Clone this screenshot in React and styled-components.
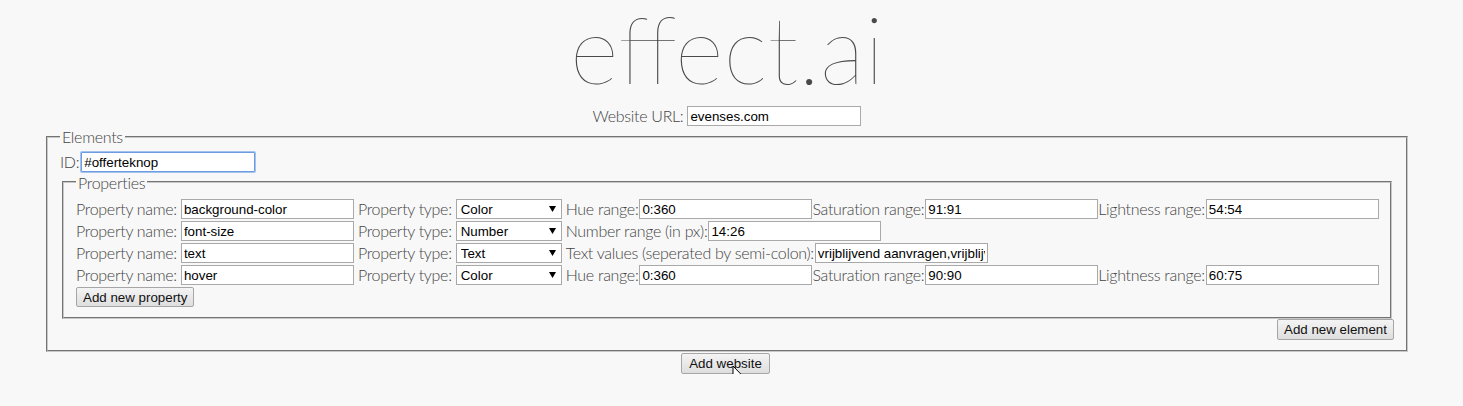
import React from "react";
import styled, { createGlobalStyle } from "styled-components";

const Global = createGlobalStyle`
  html, body { margin: 0; padding: 0; background: #f8f8f8; }
  body { font-family: Lato, "Open Sans", sans-serif; font-weight: 300; color: #3a3a3a; font-size: 16px; }
`;

const Page = styled.div`
  width: 1366px;
  margin-left: 44px;
  display: flex;
  flex-direction: column;
  align-items: center;
  position: relative;
`;

const Title = styled.h1`
  margin: 0;
  font-family: Lato, sans-serif;
  font-weight: 100;
  font-size: 94px;
  line-height: 96px;
  color: #4a4a4a;
  letter-spacing: 0;
`;

const UrlRow = styled.div`
  margin-top: 10px;
  height: 20px;
  display: flex;
  align-items: center;
`;

const Label = styled.span`
  font-family: Lato, sans-serif;
  font-weight: 300;
  font-size: 16px;
  line-height: 20px;
  letter-spacing: -0.3px;
  color: #444;
  white-space: nowrap;
  margin-right: ${p => p.$space || 0}px;
`;

const TextInput = styled.input`
  box-sizing: border-box;
  width: ${p => p.$w || 173}px;
  height: 20px;
  margin: 0 ${p => p.$after || 0}px 0 0;
  padding: 0 2px;
  border: 1px solid #a9a9a9;
  background: #fff;
  font-family: Arial, "Liberation Sans", sans-serif;
  font-size: 13.333px;
  color: #000;
  outline: none;
`;

const FocusInput = styled(TextInput)`
  border: 1px solid #6d9de0;
  box-shadow: 0 0 0 1px #a3c3ee;
  border-radius: 1px;
`;

const Fieldset = styled.fieldset`
  box-sizing: border-box;
  align-self: stretch;
  margin: ${p => p.$top || 0}px 2px 0;
  padding: ${p => p.$pt || 5.6}px 12px ${p => p.$pb || 10}px;
  border: 2px groove #c8c8c8;
  min-width: 0;
`;

const Legend = styled.legend`
  padding: 0 2px;
  font-family: Lato, sans-serif;
  font-weight: 300;
  font-size: 16px;
  line-height: 19px;
  letter-spacing: -0.3px;
  color: #444;
`;

const Row = styled.div`
  display: flex;
  align-items: center;
  height: ${p => p.$h || 22}px;
  justify-content: ${p => (p.$end ? "flex-end" : "flex-start")};
`;

const SelectWrap = styled.span`
  position: relative;
  display: inline-flex;
  margin-right: 4px;
`;

const Select = styled.select`
  appearance: none;
  -webkit-appearance: none;
  box-sizing: border-box;
  width: 106px;
  height: 20px;
  border: 1px solid #a9a9a9;
  border-radius: 0;
  background: #fff;
  padding: 0 0 0 4px;
  font-family: Arial, "Liberation Sans", sans-serif;
  font-size: 13.333px;
  color: #000;
  outline: none;
`;

const Arrow = styled.svg`
  position: absolute;
  right: 6px;
  top: 7px;
  pointer-events: none;
`;

const Button = styled.button`
  box-sizing: border-box;
  height: ${p => p.$h || 20}px;
  padding: 0 ${p => p.$px || 6}px;
  border: 1px solid #a6a6a6;
  border-radius: 2px;
  background: linear-gradient(#f4f4f4, #dedede);
  font-family: Arial, "Liberation Sans", sans-serif;
  font-size: 13.333px;
  color: #111;
  white-space: nowrap;
`;

const BottomWrap = styled.div`
  position: relative;
  display: flex;
  margin-top: 1px;
  margin-right: 3px;
`;

const Cursor = styled.svg`
  position: absolute;
  left: 51px;
  top: 12px;
`;

function TypeSelect({ value }) {
  return (
    <SelectWrap>
      <Select defaultValue={value}>
        <option>Color</option>
        <option>Number</option>
        <option>Text</option>
      </Select>
      <Arrow width="7" height="6" viewBox="0 0 7 6">
        <path d="M0 0 H7 L3.5 6 Z" fill="#000" />
      </Arrow>
    </SelectWrap>
  );
}

function PropRow({ name, type, children }) {
  return (
    <Row>
      <Label $space={4}>Property name:</Label>
      <TextInput defaultValue={name} $after={4} />
      <Label $space={4}>Property type:</Label>
      <TypeSelect value={type} />
      {children}
    </Row>
  );
}

function ColorRanges({ sat, light }) {
  return (
    <>
      <Label $space={1}>Hue range:</Label>
      <TextInput defaultValue="0:360" />
      <Label $space={1}>Saturation range:</Label>
      <TextInput defaultValue={sat} />
      <Label $space={1}>Lightness range:</Label>
      <TextInput defaultValue={light} />
    </>
  );
}

export default function App() {
  return (
    <>
      <Global />
      <Page>
        <Title>effect.ai</Title>
        <UrlRow>
          <Label $space={4}>Website URL:</Label>
          <TextInput defaultValue="evenses.com" $w={174} />
        </UrlRow>
        <Fieldset $top={1}>
          <Legend>Elements</Legend>
          <Row $h={21}>
            <Label $space={2}>ID:</Label>
            <FocusInput defaultValue="#offerteknop" $w={174} />
          </Row>
          <Fieldset $pt={6.6} $pb={9}>
            <Legend>Properties</Legend>
            <PropRow name="background-color" type="Color">
              <ColorRanges sat="91:91" light="54:54" />
            </PropRow>
            <PropRow name="font-size" type="Number">
              <Label $space={1}>Number range (in px):</Label>
              <TextInput defaultValue="14:26" />
            </PropRow>
            <PropRow name="text" type="Text">
              <Label $space={1}>Text values (seperated by semi-colon):</Label>
              <TextInput defaultValue="vrijblijvend aanvragen,vrijblijvend offerte" />
            </PropRow>
            <PropRow name="hover" type="Color">
              <ColorRanges sat="90:90" light="60:75" />
            </PropRow>
            <Row>
              <Button>Add new property</Button>
            </Row>
          </Fieldset>
          <Row $end $h={21}>
            <Button $h={21}>Add new element</Button>
          </Row>
        </Fieldset>
        <BottomWrap>
          <Button $h={21} $px={7}>Add website</Button>
          <Cursor width="13" height="20" viewBox="0 0 13 20">
            <path d="M1 1 L1 16 L4.5 12.5 L7 18.5 L9.2 17.6 L6.8 11.8 L11.5 11.8 Z" fill="#fff" stroke="#000" strokeWidth="1" strokeLinejoin="round" />
          </Cursor>
        </BottomWrap>
      </Page>
    </>
  );
}
